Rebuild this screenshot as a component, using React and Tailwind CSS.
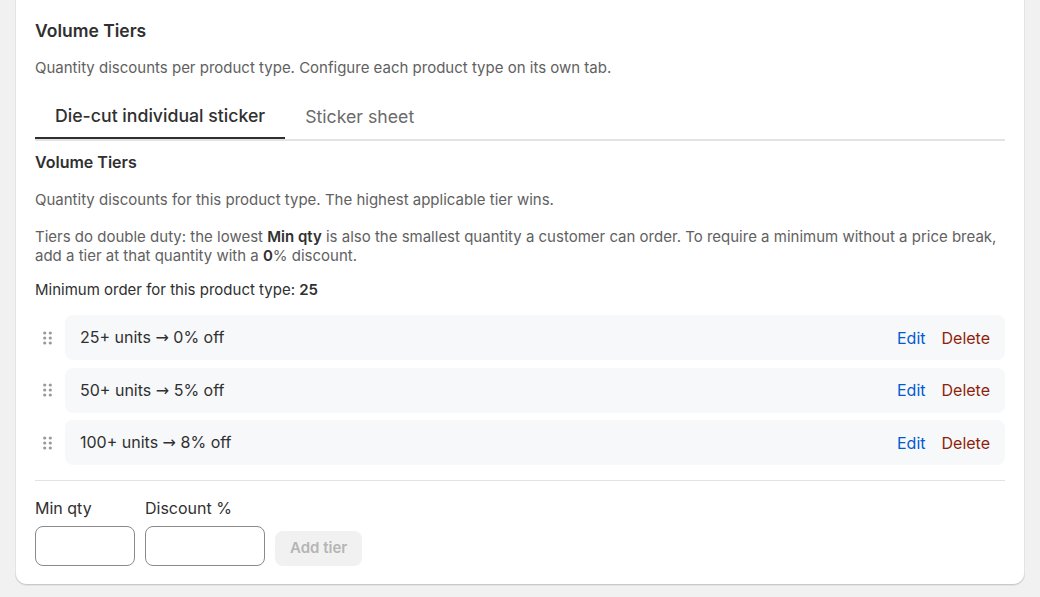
import React from 'react';

const tiers = [
  { qty: 25, pct: 0 },
  { qty: 50, pct: 5 },
  { qty: 100, pct: 8 },
];

const DragHandle = () => (
  <svg width="9" height="14" viewBox="0 0 9 14" fill="#9a9a9a">
    <circle cx="1.7" cy="2" r="1.6" />
    <circle cx="7.3" cy="2" r="1.6" />
    <circle cx="1.7" cy="7" r="1.6" />
    <circle cx="7.3" cy="7" r="1.6" />
    <circle cx="1.7" cy="12" r="1.6" />
    <circle cx="7.3" cy="12" r="1.6" />
  </svg>
);

const App = () => {
  return (
    <div className="min-h-screen bg-[#f1f1f1] pb-[12px]" style={{ fontFamily: 'Inter, "Noto Sans", sans-serif' }}>
      <div className="mx-[15px] bg-white rounded-b-xl shadow-[0_1px_0_rgba(26,26,26,0.07),inset_0_-1px_0_#c9c9c9,inset_1px_0_0_#e3e3e3,inset_-1px_0_0_#e3e3e3] px-5 pt-[19px] pb-[19px] text-[#303030]">
        <h2 className="text-[17.5px] leading-6 font-semibold">Volume Tiers</h2>
        <p className="mt-[15px] text-[15px] leading-5 text-[#616161]">
          Quantity discounts per product type. Configure each product type on its own tab.
        </p>

        {/* tabs */}
        <div className="mt-[13px] flex border-b-2 border-[#e3e3e3]">
          <button className="h-[48px] pt-[5px] px-5 -mb-[2px] border-b-2 border-[#303030] text-[17.7px] font-medium text-[#303030]">
            Die-cut individual sticker
          </button>
          <button className="h-[48px] pt-[5px] px-5 text-[17.7px] text-[#6b6b6b]">Sticker sheet</button>
        </div>

        <h3 className="mt-[11px] text-[16px] leading-5 font-semibold">Volume Tiers</h3>
        <p className="mt-[18px] text-[15px] leading-[19px] text-[#616161]">
          Quantity discounts for this product type. The highest applicable tier wins.
        </p>
        <p className="mt-[18px] text-[15px] leading-[19px] text-[#616161]">
          Tiers do double duty: the lowest <b className="font-semibold text-[#303030]">Min qty</b> is also the smallest quantity a customer can order. To require a minimum without a price break, add a tier at that quantity with a <b className="font-semibold text-[#303030]">0</b>% discount.
        </p>
        <p className="mt-[15px] text-[15px] leading-[19px] text-[#303030]">
          Minimum order for this product type: <b className="font-semibold">25</b>
        </p>

        {/* tier rows */}
        <div className="mt-[16px] flex flex-col gap-[7.5px]">
          {tiers.map((t) => (
            <div key={t.qty} className="flex items-center">
              <div className="w-[24px] mr-[6px] flex justify-center">
                <DragHandle />
              </div>
              <div className="flex-1 h-[45px] rounded-lg bg-[#f7f8fa] flex items-center justify-between px-[15px]">
                <span className="text-[16px]">
                  {t.qty}+ units <span style={{ fontFamily: '"DejaVu Sans", sans-serif' }}>→</span> {t.pct}% off
                </span>
                <div className="flex gap-4 text-[16px]">
                  <button className="text-[#005bd3]">Edit</button>
                  <button className="text-[#8e1f0b]">Delete</button>
                </div>
              </div>
            </div>
          ))}
        </div>

        <div className="mt-[15px] h-px bg-[#e3e3e3]" />

        {/* add tier form */}
        <div className="mt-[17px] flex items-end gap-[10px]">
          <label className="flex flex-col gap-2">
            <span className="text-[16px] leading-5">Min qty</span>
            <input className="w-[100px] h-[40px] rounded-lg border border-[#8a8a8a] bg-white" />
          </label>
          <label className="flex flex-col gap-2">
            <span className="text-[16px] leading-5">Discount %</span>
            <input className="w-[120px] h-[40px] rounded-lg border border-[#8a8a8a] bg-white" />
          </label>
          <button className="h-[35px] px-[15px] rounded-lg bg-[#f1f1f1] text-[15px] font-semibold text-[#b5b5b5]">
            Add tier
          </button>
        </div>
      </div>
    </div>
  );
};

export default App;
